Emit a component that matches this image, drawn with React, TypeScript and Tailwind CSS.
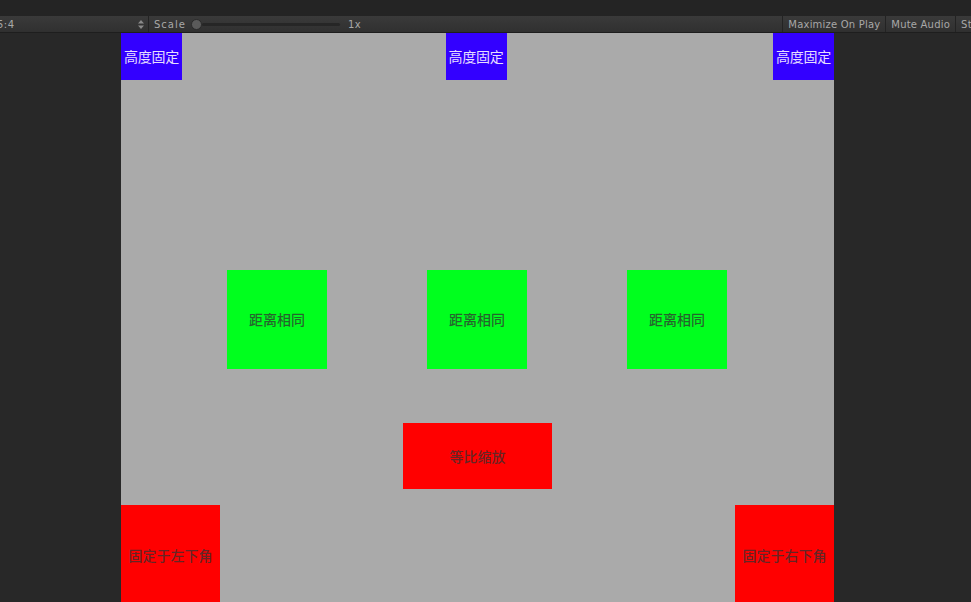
import React from 'react';

const TOOL_FONT = "font-['DejaVu_Sans','Liberation_Sans',sans-serif]";
const CJK_FONT = "font-['Noto_Sans_CJK_SC','Noto_Sans',sans-serif]";

const BlueBox: React.FC = () => (
    <div className={`w-[61px] h-[47px] bg-[#3300ff] flex items-center justify-center text-[14px] tracking-[-0.3px] text-[#e6deff] ${CJK_FONT} whitespace-nowrap`}>
        高度固定
    </div>
);

const GreenBox: React.FC = () => (
    <div className={`w-[100px] h-[99px] bg-[#00ff1e] flex items-center justify-center text-[14px] font-medium text-[#323232]/75 ${CJK_FONT}`}>
        距离相同
    </div>
);

const CornerBox: React.FC<{ text: string }> = ({ text }) => (
    <div className={`w-[99px] h-[100px] bg-[#ff0000] flex items-center justify-center text-[14px] font-medium text-[#323232]/75 ${CJK_FONT} whitespace-nowrap`}>
        {text}
    </div>
);

const ToolButton: React.FC<{ text: string }> = ({ text }) => (
    <div className="h-full px-[5px] flex items-center border-l border-[#232323] tracking-[0.2px]">{text}</div>
);

const App: React.FC = () => {
    return (
        <div className="w-[971px] h-[602px] overflow-hidden bg-[#282828] flex flex-col">
            {/* window top */}
            <div className="h-[16px] bg-[#242424]" />

            {/* game view toolbar */}
            <div className={`h-[17px] flex items-stretch bg-gradient-to-b from-[#3a3a3a] to-[#303030] border-b border-[#1e1e1e] text-[10px] text-[#a8a8a8] ${TOOL_FONT}`}>
                <div className="w-[151px] flex items-center justify-between pr-[4px] -ml-[3px]">
                    <span className="tracking-[0.5px]">5:4</span>
                    <svg width="6" height="9" viewBox="0 0 6 9" className="text-[#8a8a8a]">
                        <path d="M3 0 L6 3.5 H0 Z M3 9 L6 5.5 H0 Z" fill="currentColor" />
                    </svg>
                </div>
                <div className="flex items-center border-l border-[#232323] pl-[5px]">
                    <span className="tracking-[1px]">Scale</span>
                    <div className="ml-[5px] flex items-center">
                        <div className="w-[11px] h-[11px] rounded-full bg-[#5a5a5a] border border-[#2a2a2a]" />
                        <div className="w-[138px] h-[3px] rounded-full bg-[#262626]" />
                    </div>
                    <span className="ml-[8px] tracking-[0.5px]">1x</span>
                </div>
                <div className="flex-1" />
                <ToolButton text="Maximize On Play" />
                <ToolButton text="Mute Audio" />
                <div className="h-full w-[16px] pl-[5px] flex items-center border-l border-[#232323] tracking-[0.5px] overflow-hidden">St</div>
            </div>

            <div className="flex-1 flex min-h-0">
                <div className="w-[121px] bg-[#282828]" />

                {/* game view */}
                <div className="w-[713px] bg-[#aaaaaa] flex flex-col overflow-hidden">
                    <div className="flex justify-between">
                        <BlueBox />
                        <div className="-ml-[3px]"><BlueBox /></div>
                        <BlueBox />
                    </div>

                    <div className="mt-[190px] flex pl-[106px] gap-[100px]">
                        <GreenBox />
                        <GreenBox />
                        <GreenBox />
                    </div>

                    <div className="mt-[54px] flex pl-[282px]">
                        <div className={`w-[149px] h-[66px] bg-[#ff0000] flex items-center justify-center text-[14px] font-medium text-[#323232]/75 ${CJK_FONT}`}>
                            等比缩放
                        </div>
                    </div>

                    <div className="mt-[16px] flex justify-between">
                        <CornerBox text="固定于左下角" />
                        <CornerBox text="固定于右下角" />
                    </div>
                </div>

                <div className="flex-1 bg-[#282828]" />
            </div>
        </div>
    );
};

export default App;
